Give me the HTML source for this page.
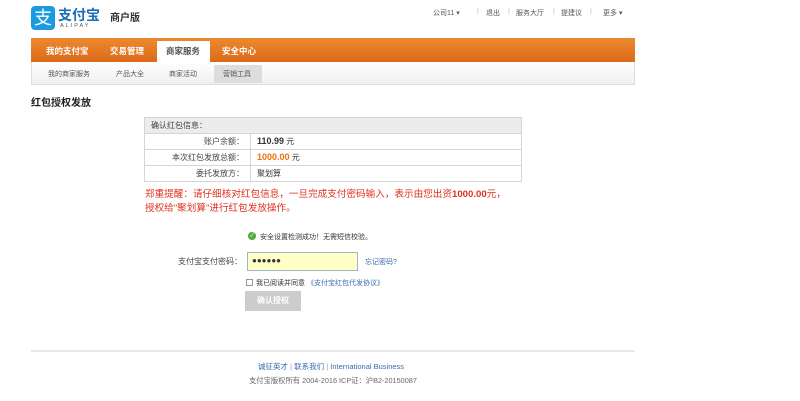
<!DOCTYPE html>
<html><head><meta charset="utf-8"><style>
*{margin:0;padding:0;box-sizing:border-box}
body{width:800px;height:401px;background:#fff;font-family:"Liberation Sans","Noto Sans CJK SC",sans-serif;font-size:8px;color:#333;position:relative;overflow:hidden}
.a{position:absolute;white-space:nowrap}
.t{position:absolute;top:8px;font-size:7px;color:#555;white-space:nowrap}
.nav{left:31px;top:38px;width:604px;height:24px;background:linear-gradient(#ec8a2e,#dd6a1a)}
.nav span{position:absolute;top:7px;color:#fff;font-weight:bold;font-size:8.5px}
.sub{left:31px;top:62px;width:604px;height:23px;background:linear-gradient(#fff,#f0f0f0);border:1px solid #ddd;border-top:none}
.sub span{position:absolute;top:7px;color:#555;font-size:7px}
table{position:absolute;left:144px;top:117px;width:378px;border-collapse:collapse;font-size:8px}
td{border:1px solid #d5d5d5;height:16px;padding:0 6px}
td.l{width:106px;text-align:right;color:#444}
.red{color:#e0311f;font-size:9.6px;left:145px}
</style></head><body>
<div class="a" style="left:31px;top:6px;width:24px;height:24px;background:#1a9be0;border-radius:4px;color:#fff;font-size:18px;line-height:24px;text-align:center">支</div>
<div class="a" style="left:58px;top:5px;font-size:14px;font-weight:bold;color:#1a6fb5">支付宝</div>
<div class="a" style="left:60px;top:23px;font-size:5.5px;letter-spacing:2px;color:#555">ALIPAY</div>
<div class="a" style="left:110px;top:9px;font-size:10px;font-weight:bold;color:#333">商户版</div>
<span class="t" style="left:433px">公司11 ▾</span><span class="t" style="left:477px;color:#bbb">|</span>
<span class="t" style="left:486px">退出</span><span class="t" style="left:508px;color:#bbb">|</span>
<span class="t" style="left:516px">服务大厅</span><span class="t" style="left:553px;color:#bbb">|</span>
<span class="t" style="left:561px">提建议</span><span class="t" style="left:590px;color:#bbb">|</span>
<span class="t" style="left:603px">更多 ▾</span>
<div class="a nav"><span style="left:15px">我的支付宝</span><span style="left:79px">交易管理</span>
<div style="position:absolute;left:126px;top:3px;width:53px;height:21px;background:#fff"></div>
<span style="left:135px;color:#555;top:7px">商家服务</span><span style="left:191px">安全中心</span></div>
<div class="a sub"><span style="left:16px">我的商家服务</span><span style="left:84px">产品大全</span><span style="left:137px">商家活动</span>
<div style="position:absolute;left:182px;top:3px;width:48px;height:18px;background:#ddd"></div><span style="left:191px">营销工具</span></div>
<div class="a" style="left:31px;top:94px;font-size:10px;font-weight:bold;color:#222">红包授权发放</div>
<table>
<tr><td colspan="2" style="background:#ececec;color:#444">确认红包信息：</td></tr>
<tr><td class="l">账户余额：</td><td><b style="font-size:9px">110.99</b> 元</td></tr>
<tr><td class="l">本次红包发放总额：</td><td><b style="font-size:9px;color:#e8730f">1000.00</b> 元</td></tr>
<tr><td class="l">委托发放方：</td><td>聚划算</td></tr>
</table>
<div class="a red" style="top:186px">郑重提醒：请仔细核对红包信息，一旦完成支付密码输入，表示由您出资<b>1000.00</b>元，</div>
<div class="a red" style="top:200px">授权给"聚划算"进行红包发放操作。</div>
<div class="a" style="left:248px;top:232px;width:8px;height:8px;border-radius:50%;background:#4caa3c;color:#fff;font-size:6px;line-height:8px;text-align:center">✓</div>
<div class="a" style="left:260px;top:232px;font-size:7px">安全设置检测成功！无需短信校验。</div>
<div class="a" style="left:178px;top:256px;font-size:8px;color:#444">支付宝支付密码：</div>
<div class="a" style="left:247px;top:252px;width:111px;height:19px;background:#ffffc6;border:1px solid #9bb8c8;font-size:8px;padding-left:4px;line-height:16px">●●●●●●</div>
<div class="a" style="left:365px;top:257px;font-size:7px;color:#3a6cb0">忘记密码?</div>
<div class="a" style="left:246px;top:279px;width:7px;height:7px;border:1px solid #999"></div>
<div class="a" style="left:256px;top:278px;font-size:7px">我已阅读并同意 <span style="color:#3a6cb0">《支付宝红包代发协议》</span></div>
<div class="a" style="left:245px;top:291px;width:56px;height:20px;background:#ccc;color:#fff;font-size:8px;font-weight:bold;text-align:center;line-height:20px">确认授权</div>
<div class="a" style="left:31px;top:350px;width:604px;height:2px;background:#e8e8e8"></div>
<div class="a" style="left:258px;top:361px;font-size:7.5px;color:#3a6cb0">诚征英才 <span style="color:#999">|</span> 联系我们 <span style="color:#999">|</span> International Business</div>
<div class="a" style="left:249px;top:376px;font-size:7.3px;color:#666">支付宝版权所有 2004-2016 ICP证：沪B2-20150087</div>
</body></html>
